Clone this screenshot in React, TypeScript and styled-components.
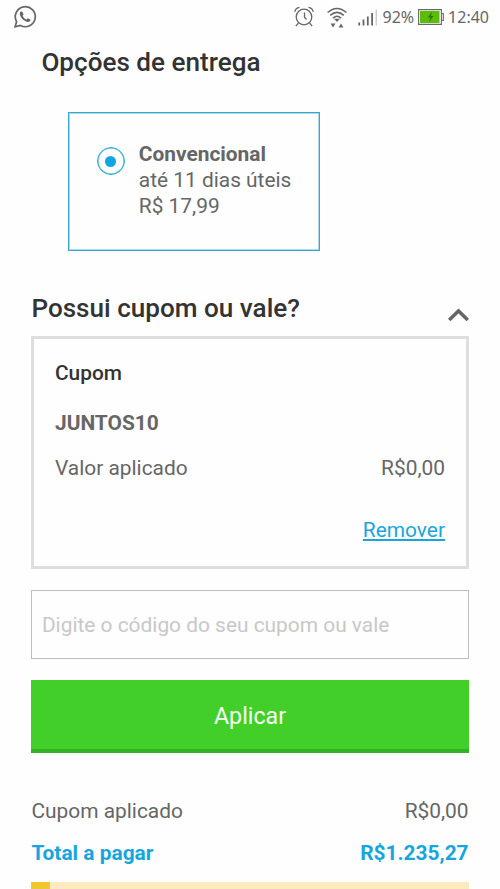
import React from "react";
import styled, { createGlobalStyle } from "styled-components";

const GlobalStyle = createGlobalStyle`
  * { box-sizing: border-box; }
  body { margin: 0; background: #fefefe; overflow: hidden; }
  button, input { font-family: inherit; }
`;

const Screen = styled.main`
  width: 500px;
  height: 889px;
  overflow: hidden;
  display: flex;
  flex-direction: column;
  background: #fefefe;
  color: #666;
  font: 400 20.9px/26px Roboto, sans-serif;
`;

const StatusBar = styled.header`
  display: flex;
  align-items: center;
  justify-content: space-between;
  flex: none;
  height: 34px;
  padding: 0 11px 0 13px;
  color: #666;
  font: 400 16px/34px "Noto Sans", sans-serif;
`;

const StatusIcons = styled.div`
  display: flex;
  align-items: center;
  height: 34px;
  svg { display: block; flex: none; }
`;

const StatusText = styled.span<{ $gap?: number }>`
  margin-left: ${(p) => p.$gap ?? 0}px;
  white-space: nowrap;
`;

const Content = styled.div`
  display: flex;
  flex-direction: column;
  flex: none;
  padding: 12px 31.4px 0 31.4px;
`;

const Heading = styled.h2`
  margin: 0;
  color: #333;
  font-size: 26.1px;
  font-weight: 500;
  line-height: 32px;
  white-space: nowrap;
`;

const DeliveryHeading = styled(Heading)`
  margin-left: 10px;
`;

const DeliveryOption = styled.label`
  display: flex;
  align-items: flex-start;
  width: 252.6px;
  height: 139px;
  margin: 34px 0 0 36.4px;
  padding: 28px 0 0 28px;
  border: 1px solid #38a6cf;
  box-shadow: inset 0 0 0 1px #a9d9ec;
`;

const Radio = styled.span`
  display: flex;
  align-items: center;
  justify-content: center;
  width: 28px;
  height: 28px;
  margin: 6px 14px 0 0;
  border: 1px solid #2fa9d3;
  box-shadow: inset 0 0 0 0.5px #2fa9d3;
  border-radius: 50%;
  &::after {
    content: "";
    width: 11px;
    height: 11px;
    border-radius: 50%;
    background: #12a5e6;
  }
`;

const DeliveryText = styled.div`
  display: flex;
  flex-direction: column;
  white-space: nowrap;
`;

const Strong = styled.strong`
  font-weight: 700;
`;

const SectionHeader = styled.div`
  display: flex;
  justify-content: space-between;
  height: 44px;
  margin-top: 41px;
  svg { margin-top: 14px; }
`;

const CouponCard = styled.section`
  display: flex;
  flex-direction: column;
  height: 233px;
  padding: 21px 20.6px 0;
  border: 3px solid #dedede;
`;

const CouponTitle = styled.h3`
  margin: 0;
  color: #333;
  font-size: 20.9px;
  font-weight: 500;
  line-height: 26px;
`;

const CouponCode = styled(Strong)`
  margin-top: 24px;
`;

const Row = styled.div<{ $top: number; $total?: boolean }>`
  display: flex;
  justify-content: space-between;
  margin-top: ${(p) => p.$top}px;
  white-space: nowrap;
  color: ${(p) => (p.$total ? "#16a6dd" : "inherit")};
  font-weight: ${(p) => (p.$total ? 700 : 400)};
`;

const RemoveLink = styled.a`
  align-self: flex-end;
  margin-top: 36px;
  color: #1ba6d9;
  text-decoration: underline;
  text-decoration-thickness: 2px;
  text-underline-offset: 2px;
  text-decoration-skip-ink: none;
`;

const CouponInput = styled.input`
  width: 100%;
  height: 69px;
  margin-top: 21px;
  padding: 1px 9.5px 0;
  border: 1px solid #bdbdbd;
  border-radius: 0;
  outline: none;
  background: #fefefe;
  font-size: 20.9px;
  &::placeholder { color: #c8c8c8; opacity: 1; }
`;

const ApplyButton = styled.button`
  height: 73px;
  margin-top: 21px;
  padding: 2px 0 0;
  border: 0;
  border-bottom: 4px solid #36b024;
  background: #42cf2a;
  color: #f6fff4;
  font-size: 23.2px;
`;

const NoticeBar = styled.div`
  height: 8px;
  margin-top: 16px;
  border-left: 19px solid #f2c62f;
  background: #fbebbf;
`;

const WhatsAppIcon = () => (
  <svg width="24" height="24" viewBox="0 0 24 24" fill="none" stroke="#666">
    <path d="M2.1 21.8 3.6 16.6A10 10 0 1 1 7.4 20.4Z" strokeWidth="1.7" />
    <path
      d="M8.1 6.5c-.8.2-1.4 1.2-1.3 2.3.4 3.8 4 7.500 7.900 8.100 1.500.2 2.800-.7 2.900-2.100l-2.800-1.500-1.300 1.300c-1.600-.6-3.200-2.100-3.900-3.800l1-1.300-1.200-2.800z"
      fill="#666"
      stroke="none"
    />
  </svg>
);

const AlarmIcon = () => (
  <svg width="20" height="22" viewBox="0 0 20 22" fill="none" stroke="#666" strokeWidth="1.3">
    <circle cx="10" cy="11" r="7.800" />
    <path d="M10.500 6.500v4.800l2 2.200M.8 5.800A5.500 5.500 0 0 1 5.500 1.400M19.200 5.800A5.500 5.500 0 0 0 14.500 1.400M4.300 17.200 1.800 20.200M15.700 17.200l2.500 3" />
  </svg>
);

const WifiIcon = () => (
  <svg width="20" height="22" viewBox="0 0 20 22" fill="none" stroke="#666" strokeWidth="1.5">
    <path d="M.6 5.500Q10-2.600 19.400 5.500M3.200 8.400Q10 2.400 16.800 8.400M5.900 11.200Q10 7.400 14.100 11.200" />
    <path d="M7 11.800h6L10 15zM3.600 16.600h4.900L6 20.600zM11.600 20.600h4.900L14 16.600z" fill="#666" stroke="none" />
  </svg>
);

const SignalIcon = () => (
  <svg width="20" height="18" viewBox="0 0 20 18">
    <path d="M.3 13.500h1.800v3H.3zM4.600 10.500h1.800v6H4.600zM8.900 7.500h1.800v9H8.900zM13.200 4h1.800v12.500h-1.800z" fill="#666" />
    <path d="M17.700 .5h1v16h-1z" fill="#b8b8b8" />
  </svg>
);

const BatteryIcon = () => (
  <svg width="26" height="18" viewBox="0 0 26 18">
    <path d="M.6 1.600h22.800v14.800H.6zM23.400 5.500h1.900v7h-1.900" fill="none" stroke="#666" strokeWidth="1.100" />
    <path d="M2 3h19.500v12H2z" fill="#5cbd08" />
    <path d="m14.200 3.500-4.400 6h2.700l-1.600 5 4.600-6.400h-2.500z" fill="#37720c" />
  </svg>
);

const AlarmSlot = styled.span`
  margin-right: 13px;
`;
const WifiSlot = styled.span`
  margin: 2px 11px 0 0;
`;
const SignalSlot = styled.span`
  margin-top: 1px;
`;
const BatterySlot = styled.span`
  margin-left: 4px;
`;

const ChevronUp = () => (
  <svg width="22" height="16" viewBox="0 0 22 16" fill="none" stroke="#666" strokeWidth="3.5">
    <path d="m2.200 14 9.300-9 9.300 9" />
  </svg>
);

export default function App() {
  return (
    <Screen>
      <GlobalStyle />
      <StatusBar>
        <WhatsAppIcon />
        <StatusIcons>
          <AlarmSlot><AlarmIcon /></AlarmSlot>
          <WifiSlot><WifiIcon /></WifiSlot>
          <SignalSlot><SignalIcon /></SignalSlot>
          <StatusText $gap={4}>92%</StatusText>
          <BatterySlot><BatteryIcon /></BatterySlot>
          <StatusText $gap={4}>12:40</StatusText>
        </StatusIcons>
      </StatusBar>
      <Content>
        <DeliveryHeading>Opções de entrega</DeliveryHeading>
        <DeliveryOption>
          <Radio />
          <DeliveryText>
            <Strong>Convencional</Strong>
            <span>até 11 dias úteis</span>
            <span>R$ 17,99</span>
          </DeliveryText>
        </DeliveryOption>
        <SectionHeader>
          <Heading>Possui cupom ou vale?</Heading>
          <ChevronUp />
        </SectionHeader>
        <CouponCard>
          <CouponTitle>Cupom</CouponTitle>
          <CouponCode>JUNTOS10</CouponCode>
          <Row $top={19}>
            <span>Valor aplicado</span>
            <span>R$0,00</span>
          </Row>
          <RemoveLink>Remover</RemoveLink>
        </CouponCard>
        <CouponInput placeholder="Digite o código do seu cupom ou vale" />
        <ApplyButton>Aplicar</ApplyButton>
        <Row $top={45}>
          <span>Cupom aplicado</span>
          <span>R$0,00</span>
        </Row>
        <Row $top={16} $total>
          <span>Total a pagar</span>
          <span>R$1.235,27</span>
        </Row>
        <NoticeBar />
      </Content>
    </Screen>
  );
}
